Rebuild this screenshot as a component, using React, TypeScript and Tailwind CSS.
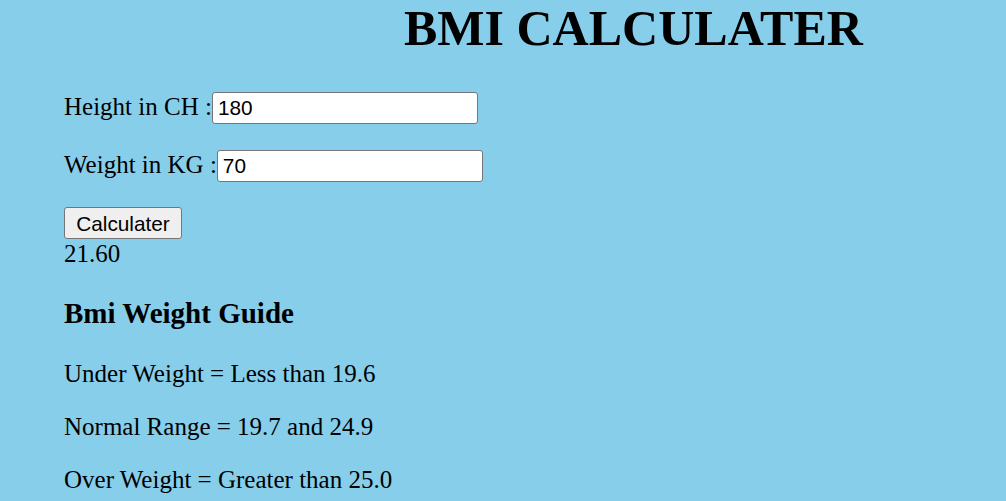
import { useState } from "react"

export default function App() {
  const [height, setHeight] = useState("180")
  const [weight, setWeight] = useState("70")
  const [bmi, setBmi] = useState("21.60")

  const calc = () => {
    const h = parseFloat(height) / 100
    const w = parseFloat(weight)
    if (h > 0 && w > 0) setBmi((w / (h * h)).toFixed(2))
  }

  return (
    <div className="min-h-screen bg-[#87ceeb] pl-[64px] text-black font-['Liberation_Serif',serif] overflow-hidden">
      <h1 className="pl-[340px] text-[50px] leading-[57px] font-bold whitespace-nowrap">BMI CALCULATER</h1>

      <div className="mt-[35px] flex items-baseline text-[25px] leading-[29px]">
        <label htmlFor="height">Height in CH :</label>
        <input
          id="height"
          value={height}
          onChange={(e) => setHeight(e.target.value)}
          className="w-[266px] h-[32px] bg-white border border-[#767676] rounded-[3px] px-[5px] text-[20.8px] font-['Liberation_Sans',Arial,sans-serif] outline-none"
        />
      </div>

      <div className="mt-[26px] flex items-baseline text-[25px] leading-[29px]">
        <label htmlFor="weight">Weight in KG :</label>
        <input
          id="weight"
          value={weight}
          onChange={(e) => setWeight(e.target.value)}
          className="w-[266px] h-[32px] bg-white border border-[#767676] rounded-[3px] px-[5px] text-[20.8px] font-['Liberation_Sans',Arial,sans-serif] outline-none"
        />
      </div>

      <button
        onClick={calc}
        className="mt-[25px] block w-[118px] h-[32px] bg-[#efefef] border border-[#767676] rounded-[3px] text-[20.8px] font-['Liberation_Sans',Arial,sans-serif] text-center"
      >
        Calculater
      </button>
      <div className="text-[25px] leading-[29px]">{bmi}</div>

      <h3 className="mt-[29px] text-[29px] leading-[33px] font-bold">Bmi Weight Guide</h3>
      <p className="mt-[29px] text-[25px] leading-[29px]">Under Weight = Less than 19.6</p>
      <p className="mt-[24px] text-[25px] leading-[29px]">Normal Range = 19.7 and 24.9</p>
      <p className="mt-[24px] text-[25px] leading-[29px]">Over Weight = Greater than 25.0</p>
    </div>
  )
}
